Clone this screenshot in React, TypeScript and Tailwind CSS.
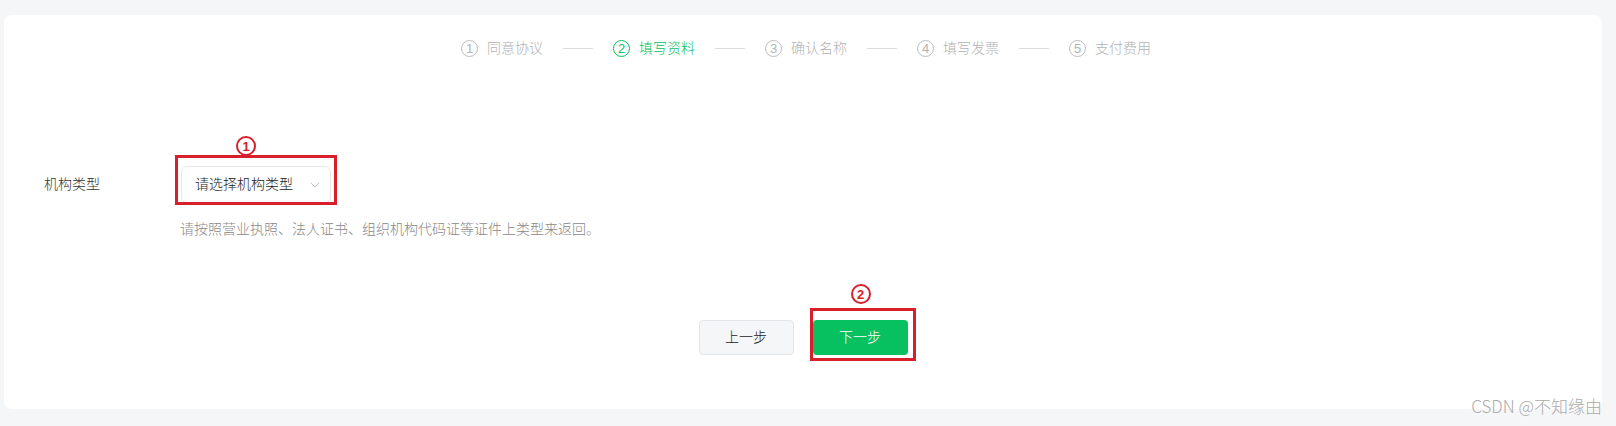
import { ChevronDown } from 'lucide-react';

const steps = ['同意协议', '填写资料', '确认名称', '填写发票', '支付费用'];
const current = 1;

function Mark({ n }: { n: number }) {
    return (
        <span className="flex items-center justify-center w-[20px] h-[20px] rounded-full border-2 border-[#d7202c] text-[#d7202c] text-[13px] font-bold leading-none">
            {n}
        </span>
    );
}

export default function App() {
    return (
        <div
            className="relative h-[426px] w-[1616px] bg-[#f5f6f8] pt-[15px] pl-[4px] pr-[14px] font-light"
            style={{ fontFamily: "'Liberation Sans', 'Noto Sans CJK SC', sans-serif" }}
        >
            <div className="h-[394px] bg-white rounded-lg pt-[23px] flex flex-col">
                {/* steps */}
                <div className="flex items-center justify-center pl-[6px]">
                    {steps.map((s, i) => {
                        const active = i === current;
                        return (
                            <div key={s} className="flex items-center">
                                {i > 0 && <div className="w-[30px] h-px bg-[#dcdcdc] mx-[20px]" />}
                                <span
                                    className={
                                        active
                                            ? 'flex items-center justify-center w-[17px] h-[17px] rounded-full border border-[#07c160] text-[#07c160] text-[13px] leading-none'
                                            : 'flex items-center justify-center w-[17px] h-[17px] rounded-full border border-[#bdbdbd] text-[#b2b2b2] text-[13px] leading-none'
                                    }
                                >
                                    {i + 1}
                                </span>
                                <span className={active ? 'ml-[9px] text-[14px] text-[#07c160]' : 'ml-[9px] text-[14px] text-[#b2b2b2]'}>{s}</span>
                            </div>
                        );
                    })}
                </div>

                {/* form */}
                <div className="mt-[107px] pl-[40px] flex items-center">
                    <div className="w-[137px] text-[14px] text-[#333]">机构类型</div>
                    <div className="relative">
                        <div className="w-[150px] h-[37px] rounded-md border border-[#e6e8eb] flex items-center justify-between pl-[13px] pr-[7px] text-[14px] text-[#222]">
                            <span>请选择机构类型</span>
                            <ChevronDown className="w-[16px] h-[16px] text-[#a8a8a8]" strokeWidth={1} />
                        </div>
                        <div className="absolute left-[-6px] top-[-11px] w-[162px] h-[50px] border-[3px] border-[#d7202c]" />
                        <div className="absolute left-[55px] top-[-30px]">
                            <Mark n={1} />
                        </div>
                    </div>
                </div>
                <div className="mt-[16px] pl-[176px] text-[14px] text-[#888] leading-[20px]">
                    请按照营业执照、法人证书、组织机构代码证等证件上类型来返回。
                </div>

                {/* buttons */}
                <div className="mt-[81px] flex justify-center gap-[19px]">
                    <button className="w-[95px] h-[35px] rounded bg-[#f5f6f7] border border-[#e3e5e8] text-[14px] text-[#222]">上一步</button>
                    <div className="relative">
                        <button className="w-[95px] h-[35px] rounded bg-[#07c160] text-[14px] text-white">下一步</button>
                        <div className="absolute left-[-3px] top-[-12px] w-[106px] h-[53px] border-[3px] border-[#d7202c]" />
                        <div className="absolute left-[38px] top-[-36px]">
                            <Mark n={2} />
                        </div>
                    </div>
                </div>
            </div>

            <div
                className="absolute right-[14px] bottom-[8px] text-[17px] text-[#ababab]"
                style={{ fontFamily: "'Noto Sans CJK SC', sans-serif", textShadow: '0 0 2px #fff' }}
            >
                CSDN @不知缘由
            </div>
        </div>
    );
}
